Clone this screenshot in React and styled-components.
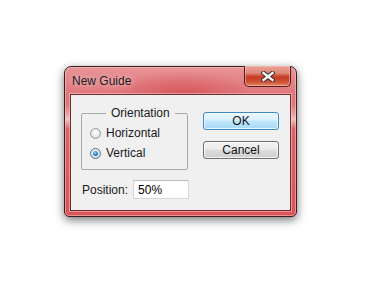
import React from 'react';
import styled, { createGlobalStyle } from 'styled-components';

const GlobalStyle = createGlobalStyle`
  html, body {
    margin: 0;
    padding: 0;
    background: #ffffff;
  }
  body {
    font-family: "Liberation Sans", Arial, sans-serif;
  }
`;

const Stage = styled.div`
  width: 378px;
  height: 287px;
  box-sizing: border-box;
  padding: 66px 0 0 64px;
`;

// The red Aero-style window frame
const Window = styled.div`
  position: relative;
  width: 233px;
  box-sizing: border-box;
  border: 1px solid #3e1c1c;
  border-radius: 7px 7px 5px 5px;
  padding: 0 5px 5px 5px;
  background:
    radial-gradient(ellipse 70px 22px at 118px 26px, rgba(205, 60, 64, 0.55), rgba(205, 60, 64, 0) 100%),
    linear-gradient(to bottom, #e79497 0px, #e27f83 18px, #dd7276 36px, #e8a3a5 48px, #f0c4c5 52px, #dc6266 62px, #d9555a 100%);
  box-shadow:
    inset 0 0 0 1px rgba(255, 220, 220, 0.45),
    0 3px 10px rgba(0, 0, 0, 0.55);
`;

const TitleBar = styled.div`
  height: 27px;
  display: flex;
  align-items: center;
  padding-left: 2px;
  font-size: 12px;
  color: #1c1c24;
  text-shadow: 0 0 6px rgba(255, 235, 235, 0.9);
`;

const CloseButton = styled.div`
  position: absolute;
  top: -1px;
  right: 5px;
  width: 47px;
  height: 21px;
  box-sizing: border-box;
  border: 1px solid #4e1e1a;
  border-top: none;
  border-radius: 0 0 5px 5px;
  background: linear-gradient(to bottom, #eba296 0%, #df8877 35%, #c73a22 55%, #cf5236 80%, #e08a6a 100%);
  box-shadow: inset 0 0 0 1px rgba(255, 200, 190, 0.5);
  display: flex;
  align-items: center;
  justify-content: center;
`;

const Client = styled.div`
  background: #f0f0f0;
  border: 1px solid #6a2c2c;
  box-shadow: 0 0 0 1px rgba(255, 210, 210, 0.5);
  padding: 11px 10px 11px 10px;
  display: flex;
  flex-direction: column;
  gap: 10px;
`;

const TopRow = styled.div`
  display: flex;
  align-items: flex-start;
  gap: 15px;
`;

const Group = styled.fieldset`
  margin: 0;
  width: 107px;
  height: 64px;
  box-sizing: border-box;
  border: 1px solid #a8a8a8;
  border-radius: 2px;
  padding: 6px 0 0 8px;
  display: flex;
  flex-direction: column;
  gap: 6px;
`;

const Legend = styled.legend`
  margin-left: 16px;
  padding: 0 5px;
  font-size: 12px;
  line-height: 14px;
  color: #1a1a22;
`;

const RadioRow = styled.label`
  display: flex;
  align-items: center;
  gap: 5px;
  font-size: 12px;
  line-height: 14px;
  color: #1a1a22;
`;

const RadioDot = styled.span`
  width: 11px;
  height: 11px;
  box-sizing: border-box;
  border-radius: 50%;
  border: 1px solid ${p => (p.$checked ? '#4e6f8e' : '#9a9a9a')};
  background: radial-gradient(circle at 50% 40%, #ffffff 0%, #e4e4e4 60%, #c8c8c8 100%);
  display: flex;
  align-items: center;
  justify-content: center;

  &::after {
    content: '';
    display: ${p => (p.$checked ? 'block' : 'none')};
    width: 5px;
    height: 5px;
    border-radius: 50%;
    background: radial-gradient(circle at 40% 35%, #9fd8ff 0%, #2c8ed6 45%, #0d4f8c 100%);
  }
`;

const Buttons = styled.div`
  margin-top: 6px;
  display: flex;
  flex-direction: column;
  gap: 11px;
`;

const Button = styled.div`
  width: 76px;
  height: 18px;
  box-sizing: border-box;
  border-radius: 3px;
  border: 1px solid ${p => (p.$primary ? '#3c8ac4' : '#707070')};
  background: ${p =>
    p.$primary
      ? 'linear-gradient(to bottom, #eaf6fd 0%, #d9f0fc 45%, #bee6fd 50%, #a7d9f5 100%)'
      : 'linear-gradient(to bottom, #f2f2f2 0%, #ebebeb 45%, #dddddd 50%, #cfcfcf 100%)'};
  box-shadow: inset 0 0 0 1px rgba(255, 255, 255, 0.7);
  display: flex;
  align-items: center;
  justify-content: center;
  font-size: 12px;
  color: #111;
`;

const PositionRow = styled.div`
  display: flex;
  align-items: center;
  gap: 5px;
  padding-left: 1px;
  font-size: 12px;
  color: #1a1a22;
`;

const Input = styled.div`
  width: 56px;
  height: 19px;
  box-sizing: border-box;
  background: #ffffff;
  border: 1px solid #d6d6d6;
  border-top-color: #bcbcbc;
  padding-left: 4px;
  display: flex;
  align-items: center;
  font-size: 12px;
  color: #000;
`;

const CloseGlyph = () => (
  <svg width="14" height="11" viewBox="0 0 14 11">
    <path d="M2.5 2 L11.5 9 M11.5 2 L2.5 9" stroke="#3a2a2a" strokeWidth="4.4" strokeLinecap="square" />
    <path d="M2.5 2 L11.5 9 M11.5 2 L2.5 9" stroke="#f4f4f4" strokeWidth="2.4" strokeLinecap="square" />
  </svg>
);

export default function App() {
  return (
    <>
      <GlobalStyle />
      <Stage>
        <Window>
          <TitleBar>New Guide</TitleBar>
          <CloseButton>
            <CloseGlyph />
          </CloseButton>
          <Client>
            <TopRow>
              <Group>
                <Legend>Orientation</Legend>
                <RadioRow>
                  <RadioDot />
                  Horizontal
                </RadioRow>
                <RadioRow>
                  <RadioDot $checked />
                  Vertical
                </RadioRow>
              </Group>
              <Buttons>
                <Button $primary>OK</Button>
                <Button>Cancel</Button>
              </Buttons>
            </TopRow>
            <PositionRow>
              Position:
              <Input>50%</Input>
            </PositionRow>
          </Client>
        </Window>
      </Stage>
    </>
  );
}
